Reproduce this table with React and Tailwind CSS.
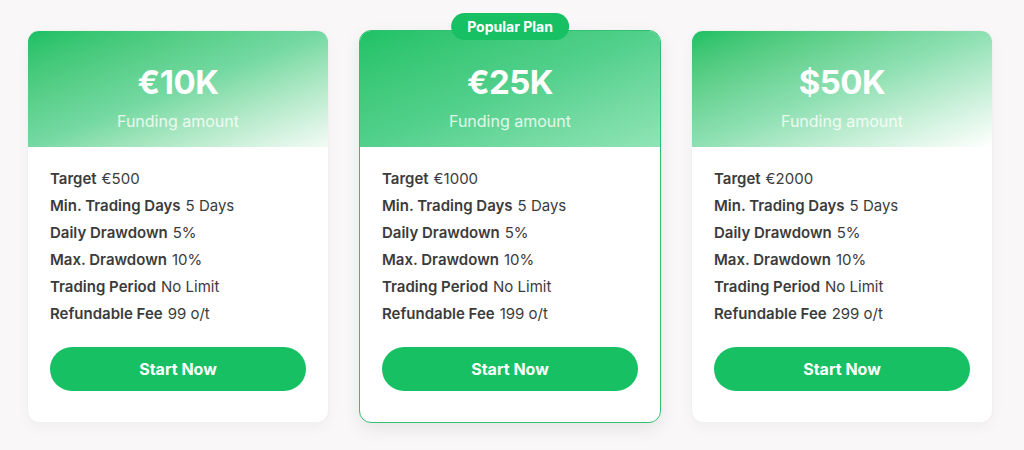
import React from "react";

const plans = [
  {
    amount: "€10K",
    target: "€500",
    fee: "99 o/t",
    head: "bg-linear-to-br from-[#17c063] via-[#74d9a2] to-[#f3fbf6]",
  },
  {
    amount: "€25K",
    target: "€1000",
    fee: "199 o/t",
    popular: true,
    head: "bg-linear-to-br from-[#1ec266] via-[#52d08c] to-[#8fe4b6]",
  },
  {
    amount: "$50K",
    target: "€2000",
    fee: "299 o/t",
    head: "bg-linear-to-br from-[#17c063] via-[#8ee0b3] to-[#ffffff]",
  },
];

const Row = ({ label, value }) => (
  <div className="h-[27px] flex items-center text-[15px] text-[#3b3b3b]">
    <span className="font-semibold">{label}</span>
    <span className="ml-[5px]">{value}</span>
  </div>
);

const PlanCard = ({ plan }) => (
  <div
    className={
      "relative w-[302px] bg-white rounded-[12px] flex flex-col " +
      (plan.popular
        ? "border-[1.5px] border-[#2fc270] shadow-[0_6px_18px_rgba(0,0,0,0.08)]"
        : "border border-[#f1f1f1] shadow-[0_4px_14px_rgba(0,0,0,0.04)]")
    }
  >
    {plan.popular && (
      <div className="absolute left-1/2 -translate-x-1/2 -top-[18px] h-[27px] px-[16px] rounded-full bg-[#17c063] text-white text-[14px] font-bold flex items-center">
        Popular Plan
      </div>
    )}
    <div
      className={
        "h-[116px] rounded-t-[11px] flex flex-col items-center pt-[35px] " +
        plan.head
      }
    >
      <div className="text-white text-[33px] font-bold leading-none tracking-[-0.5px]">
        {plan.amount}
      </div>
      <div className="text-white/80 text-[16px] mt-[14px] leading-none">
        Funding amount
      </div>
    </div>
    <div className="px-[22px] pt-[19px] pb-[31px] flex flex-col">
      <Row label="Target" value={plan.target} />
      <Row label="Min. Trading Days" value="5 Days" />
      <Row label="Daily Drawdown" value="5%" />
      <Row label="Max. Drawdown" value="10%" />
      <Row label="Trading Period" value="No Limit" />
      <Row label="Refundable Fee" value={plan.fee} />
      <button className="mt-[19px] h-[44px] w-full rounded-full bg-[#17c063] text-white text-[16px] font-bold">
        Start Now
      </button>
    </div>
  </div>
);

export default function App() {
  return (
    <div
      className="w-[1024px] h-[450px] bg-[#f9f7f7] flex items-start gap-[30px] px-[27px] pt-[30px]"
      style={{ fontFamily: "Inter, 'Noto Sans', sans-serif" }}
    >
      {plans.map((p) => (
        <PlanCard key={p.amount} plan={p} />
      ))}
    </div>
  );
}
